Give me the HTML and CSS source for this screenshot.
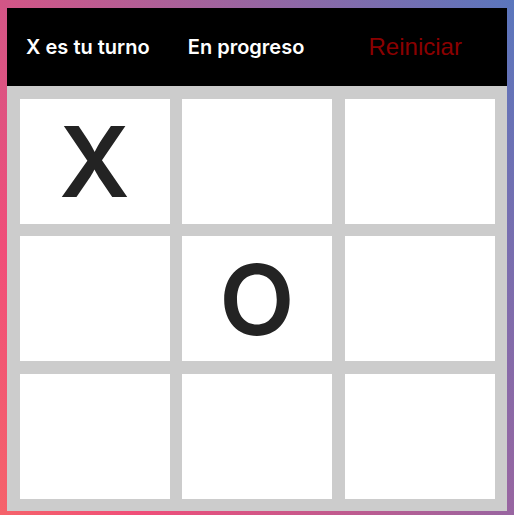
FILE: index.html
```html
<!DOCTYPE html>
<html lang="es">
<head>
<meta charset="utf-8">
<title>Tres en raya</title>
<link rel="stylesheet" href="styles.css">
</head>
<body>
<main class="game">
  <header class="bar">
    <span class="turn">X es tu turno</span>
    <span class="status">En progreso</span>
    <button class="reset" type="button">Reiniciar</button>
  </header>
  <section class="board">
    <div class="cell">X</div>
    <div class="cell"></div>
    <div class="cell"></div>
    <div class="cell"></div>
    <div class="cell">O</div>
    <div class="cell"></div>
    <div class="cell"></div>
    <div class="cell"></div>
    <div class="cell"></div>
  </section>
</main>
</body>
</html>
```

FILE: styles.css
```css
html {
  height: 100%;
}

body {
  margin: 0;
  min-height: 100%;
  background: linear-gradient(63deg, #f5636a 0%, #f04e79 18%, #5a76bd 100%);
  font-family: Inter, "Noto Sans", sans-serif;
  display: flex;
  justify-content: center;
  align-items: flex-start;
}

.game {
  width: 500px;
  margin-top: 8px;
}

.bar {
  height: 78px;
  background: #000;
  display: flex;
  align-items: center;
  justify-content: space-around;
}

.turn,
.status {
  color: #fff;
  font-size: 20px;
  font-weight: 600;
}

.reset {
  background: none;
  border: none;
  padding: 0 26px;
  color: #8b0000;
  font-family: "Liberation Sans", Arial, sans-serif;
  font-size: 24px;
  line-height: 28px;
}

.board {
  background: #cccccc;
  padding: 12.5px;
  display: grid;
  grid-template-columns: repeat(3, 150px);
  grid-template-rows: repeat(3, 125px);
  gap: 12.5px;
}

.cell {
  background: #fff;
  display: flex;
  align-items: center;
  justify-content: center;
  color: #232323;
  font-size: 98px;
  font-weight: 600;
  line-height: 1;
  padding-top: 2px;
  box-sizing: border-box;
}
```
